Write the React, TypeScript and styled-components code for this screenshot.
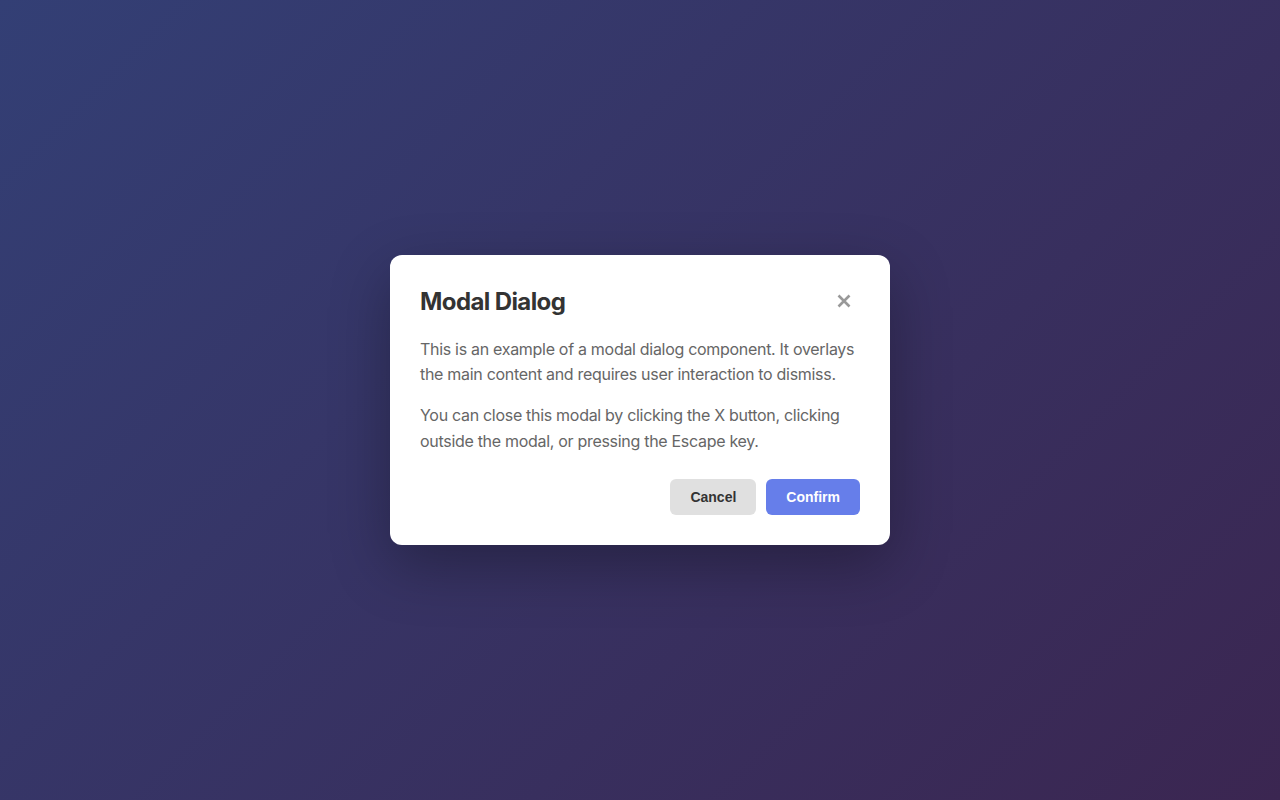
import React from 'react';
import styled, {createGlobalStyle} from 'styled-components';

const GlobalStyle = createGlobalStyle`
  * {
    box-sizing: border-box;
  }

  html, body, #root {
    margin: 0;
    height: 100%;
  }

  body {
    font-family: Inter, "Noto Sans", sans-serif;
  }
`

const Backdrop = styled.div`
  height: 100vh;
  display: flex;
  align-items: center;
  justify-content: center;
  background: linear-gradient(135deg, #333f75 0%, #3b2651 100%);
`

const Modal = styled.div`
  width: 500px;
  padding: 30px;
  background: #fff;
  border-radius: 12px;
  box-shadow: 0 20px 60px rgba(0, 0, 0, 0.3);
`

const Header = styled.div`
  display: flex;
  align-items: center;
  justify-content: space-between;
  height: 30px;
  margin: 1px 0 21px;
`

const Title = styled.h2`
  margin: 0 0 0;
  padding-top: 1px;
  font-size: 24px;
  font-weight: 700;
  color: #333;
  letter-spacing: -0.6px;
`

const CloseButton = styled.button`
  width: 30px;
  height: 30px;
  padding: 0;
  margin-right: 1px;
  border: none;
  background: none;
  display: flex;
  align-items: center;
  justify-content: center;
  cursor: pointer;
  color: #999;
`

const Text = styled.p`
  margin: 0 0 15px;
  font-size: 16px;
  line-height: 1.6;
  letter-spacing: -0.3px;
  color: #666;
`

const Footer = styled.div`
  display: flex;
  justify-content: flex-end;
  gap: 10px;
  margin-top: 25px;
`

const Button = styled.button<{ $primary?: boolean }>`
  padding: 10px 20px;
  border: none;
  border-radius: 6px;
  font-family: "Liberation Sans", Arial, sans-serif;
  font-size: 14px;
  font-weight: 700;
  cursor: pointer;
  background: ${p => p.$primary ? '#667eea' : '#e0e0e0'};
  color: ${p => p.$primary ? '#fff' : '#333'};
`

const CloseIcon = () => (
    <svg width="14" height="14" viewBox="0 0 14 14">
        <path d="M1.5 1.5 L12.5 12.5 M12.5 1.5 L1.5 12.5" stroke="currentColor" strokeWidth="2.6"/>
    </svg>
)

export default function App() {
    return (
        <>
            <GlobalStyle/>
            <Backdrop>
                <Modal>
                    <Header>
                        <Title>Modal Dialog</Title>
                        <CloseButton aria-label="Close"><CloseIcon/></CloseButton>
                    </Header>
                    <Text>
                        This is an example of a modal dialog component. It overlays the main content and
                        requires user interaction to dismiss.
                    </Text>
                    <Text style={{marginBottom: 0}}>
                        You can close this modal by clicking the X button, clicking outside the modal, or
                        pressing the Escape key.
                    </Text>
                    <Footer>
                        <Button>Cancel</Button>
                        <Button $primary>Confirm</Button>
                    </Footer>
                </Modal>
            </Backdrop>
        </>
    )
}
